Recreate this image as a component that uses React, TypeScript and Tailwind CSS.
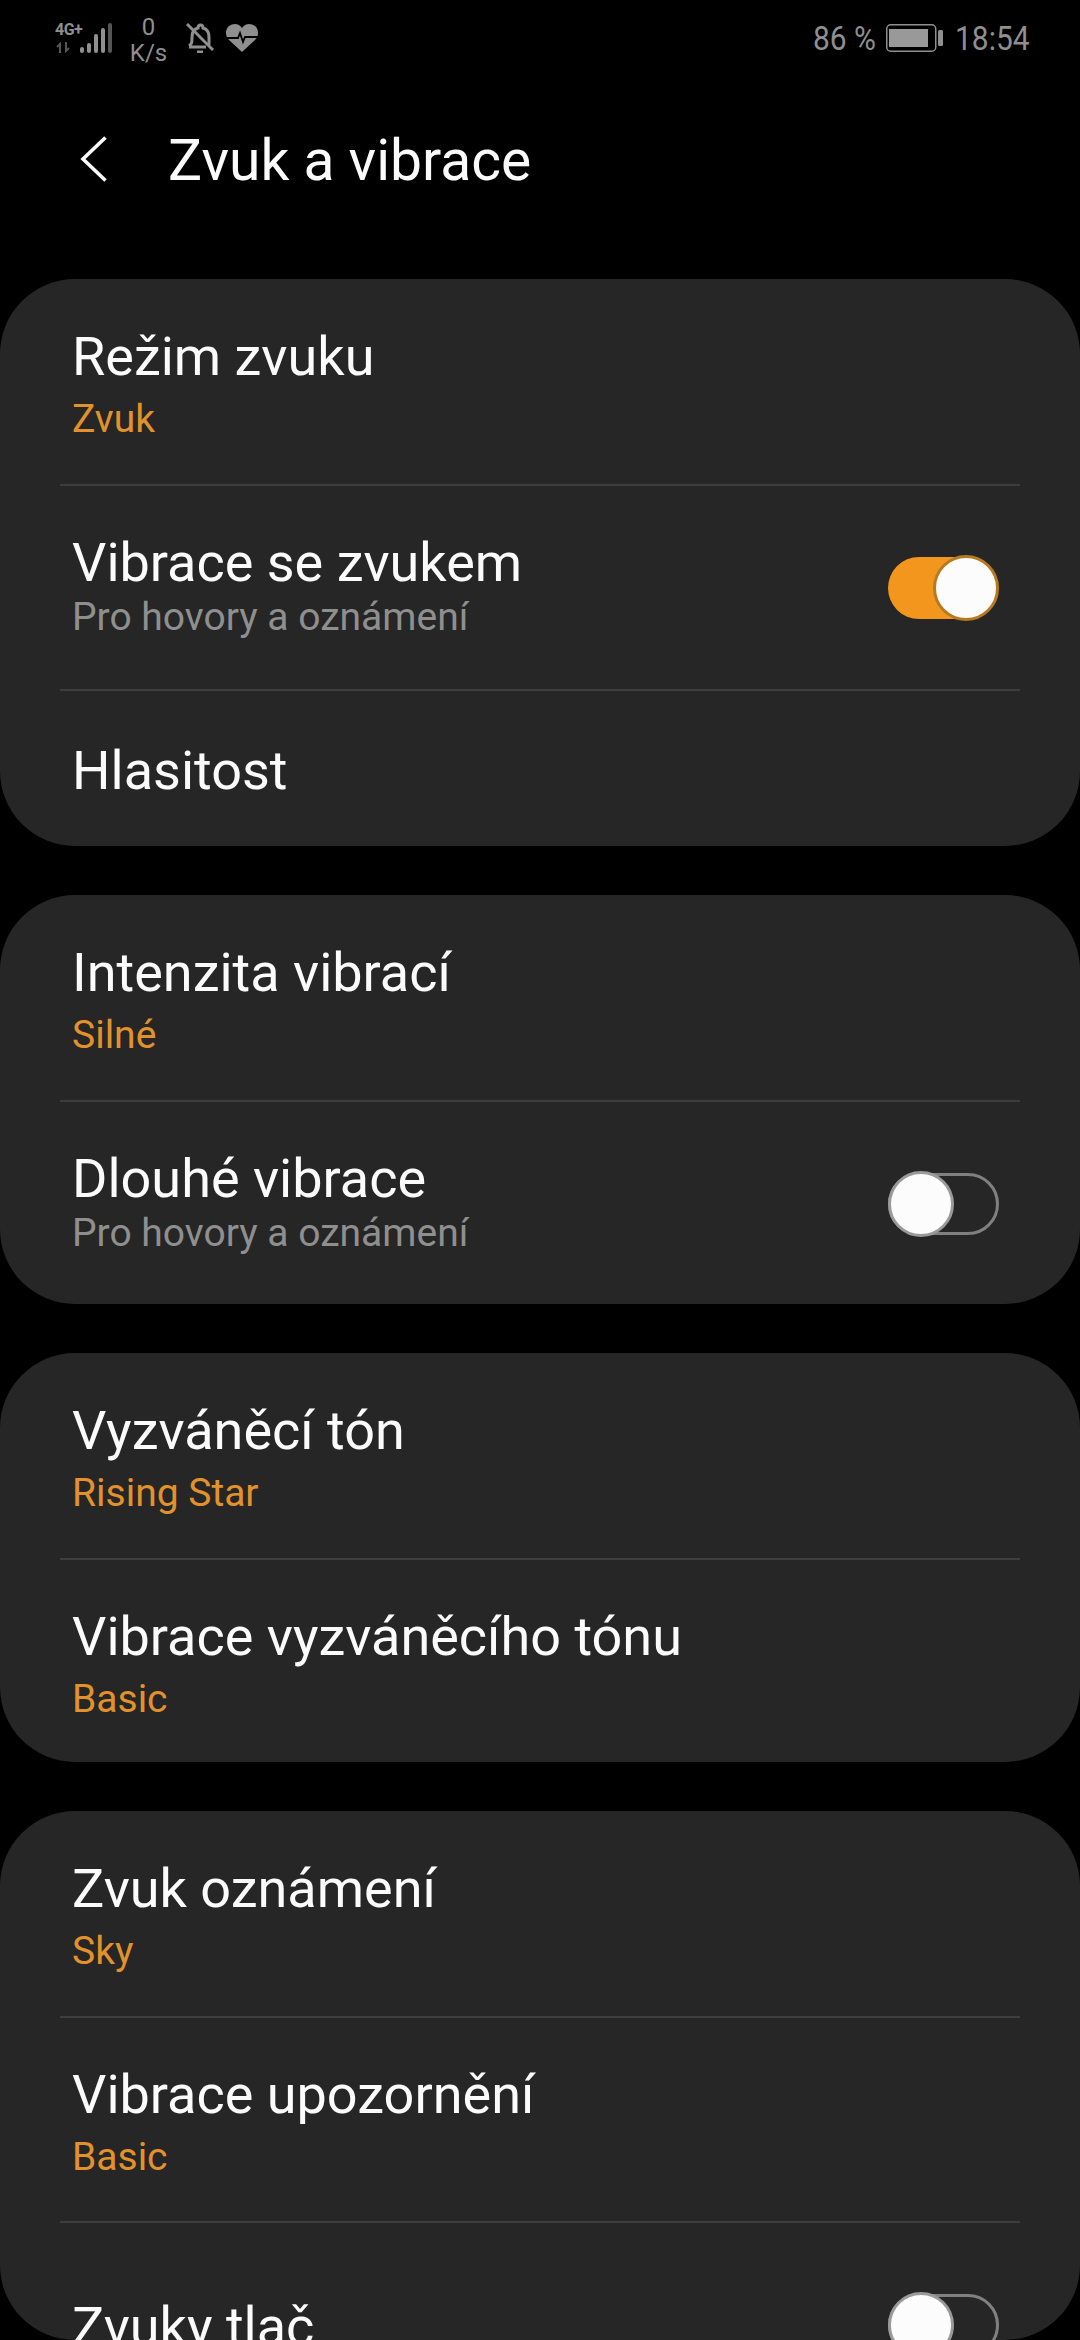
import React from "react";

type RowData = {
  title: string;
  value?: string;
  hint?: string;
  toggle?: "on" | "off";
  short?: boolean;
};

const groups: { rows: RowData[]; height: string }[] = [
  {
    height: "h-[567px]",
    rows: [
      { title: "Režim zvuku", value: "Zvuk" },
      { title: "Vibrace se zvukem", hint: "Pro hovory a oznámení", toggle: "on" },
      { title: "Hlasitost", short: true },
    ],
  },
  {
    height: "h-[409px]",
    rows: [
      { title: "Intenzita vibrací", value: "Silné" },
      { title: "Dlouhé vibrace", hint: "Pro hovory a oznámení", toggle: "off" },
    ],
  },
  {
    height: "h-[409px]",
    rows: [
      { title: "Vyzváněcí tón", value: "Rising Star" },
      { title: "Vibrace vyzváněcího tónu", value: "Basic" },
    ],
  },
  {
    height: "h-[529px]",
    rows: [
      { title: "Zvuk oznámení", value: "Sky" },
      { title: "Vibrace upozornění", value: "Basic" },
      { title: "Zvuky tlač", toggle: "off" },
    ],
  },
];

const Toggle = ({ on }: { on: boolean }) => (
  <div className="h-[62px] w-[111px]">
    {on ? (
      <div className="relative h-[62px] w-[109px] rounded-full bg-[#f2961e]">
        <div className="absolute right-[-2px] top-[-2px] h-[66px] w-[66px] rounded-full border-[3px] border-[#b87a20] bg-[#fcfcfc]" />
      </div>
    ) : (
      <div className="relative h-[62px] w-[111px] rounded-full border-[3px] border-[#808080]">
        <div className="absolute left-[-3px] top-[-5px] h-[66px] w-[66px] rounded-full border-[3px] border-[#9a9a9a] bg-[#fcfcfc]" />
      </div>
    )}
  </div>
);

const Row = ({ row, first }: { row: RowData; first: boolean }) => (
  <div className={`flex flex-col ${row.short ? "h-[157px]" : "h-[205px]"}`}>
    {!first && <div className="mx-[60px] h-[2px] shrink-0 bg-[#3e3e3e]" />}
    <div className="flex min-h-0 flex-1 items-center justify-between pl-[72px] pr-[81px]">
      <div className="pt-[5px]">
        <div className="text-[54px] leading-[62px] text-[#fbfbfb]">{row.title}</div>
        {row.value && <div className="mt-[8px] text-[39px] leading-[46px] text-[#e2922c]">{row.value}</div>}
        {row.hint && <div className="pb-[8px] text-[39px] leading-[46px] text-[#8f8f8f]">{row.hint}</div>}
      </div>
      {row.toggle && <Toggle on={row.toggle === "on"} />}
    </div>
  </div>
);

const StatusBar = () => (
  <div className="flex h-[75px] items-center justify-between pl-[55px] pr-[52px] text-[#8f8f8f]">
    <div className="flex items-center">
      <div className="flex h-[30px] w-[25px] flex-col justify-between">
        <span className="whitespace-nowrap text-[16px] font-bold leading-[13px] tracking-[-0.5px]">4G+</span>
        <svg width="16" height="11" viewBox="0 0 16 11" fill="none" stroke="#555" strokeWidth="2">
          <path d="M5 11V2L2 5M11 0v9l3-3" />
        </svg>
      </div>
      <svg width="32" height="30" viewBox="0 0 32 30" fill="#8f8f8f">
        <rect x="0" y="24" width="4" height="6" rx="2" />
        <rect x="7" y="20" width="4" height="10" rx="2" />
        <rect x="14" y="11" width="4" height="19" rx="2" />
        <rect x="21" y="5" width="4" height="25" rx="2" />
        <rect x="28" y="0" width="4" height="30" rx="2" fill="#555" />
      </svg>
      <div className="ml-[20px] flex w-[33px] flex-col items-center pt-[4px] text-[24px] leading-[26px]">
        <span>0</span>
        <span>K/s</span>
      </div>
      <svg className="ml-[21px]" width="28" height="31" viewBox="0 0 28 31" fill="none" stroke="#8f8f8f" strokeWidth="3">
        <path d="M3 24c3-2 3-4 3-9 0-5 2-8 6-9 0-4 5-4 5 0 4 1 6 4 6 9v8M3 25h17" />
        <path d="M1 2l26 26" />
        <path d="M11 30h6" />
      </svg>
      <svg className="ml-[12px]" width="32" height="29" viewBox="0 0 32 29" fill="#8f8f8f">
        <path d="M16 29L3 17C-1 13-1 6 3 3c4-3 10-3 13 2 3-5 9-5 13-2 4 3 4 10 0 14z" />
        <path d="M0 15h12l2-5 3 9 2-5h13" stroke="#000" strokeWidth="1.8" fill="none" />
      </svg>
    </div>
    <div className="flex items-center">
      <span className="w-[61px] origin-left scale-x-[0.88] whitespace-nowrap text-[34px] leading-[34px]">86 %</span>
      <svg className="ml-[12px]" width="57" height="28" viewBox="0 0 57 28">
        <rect x="0.75" y="0.75" width="49" height="26.5" rx="4" fill="none" stroke="#8f8f8f" strokeWidth="1.5" />
        <rect x="3" y="5" width="39" height="18" fill="#999999" />
        <rect x="52" y="6" width="5" height="16" rx="1.5" fill="#8f8f8f" />
      </svg>
      <span className="ml-[12px] w-[73px] origin-left scale-x-[0.88] whitespace-nowrap text-[34px] leading-[34px]">18:54</span>
    </div>
  </div>
);

export default function App() {
  return (
    <div className="h-[2340px] w-[1080px] overflow-hidden bg-black font-['Roboto',sans-serif]">
      <StatusBar />
      <div className="flex h-[168px] items-center pl-[80px]">
        <svg width="27" height="46" viewBox="0 0 27 46" fill="none" stroke="#fafafa" strokeWidth="3.6">
          <path d="M25.5 1.5L3 23l22.5 21.5" />
        </svg>
        <h1 className="ml-[61px] pt-[3px] text-[57px] font-normal leading-[64px] text-[#fbfbfb]">Zvuk a vibrace</h1>
      </div>
      <div className="mt-[36px] flex flex-col gap-[49px]">
        {groups.map((g) => (
          <div key={g.rows[0].title} className={`${g.height} overflow-hidden rounded-[75px] bg-[#262626]`}>
            {g.rows.map((r, i) => (
              <Row key={r.title} row={r} first={i === 0} />
            ))}
          </div>
        ))}
      </div>
    </div>
  );
}
